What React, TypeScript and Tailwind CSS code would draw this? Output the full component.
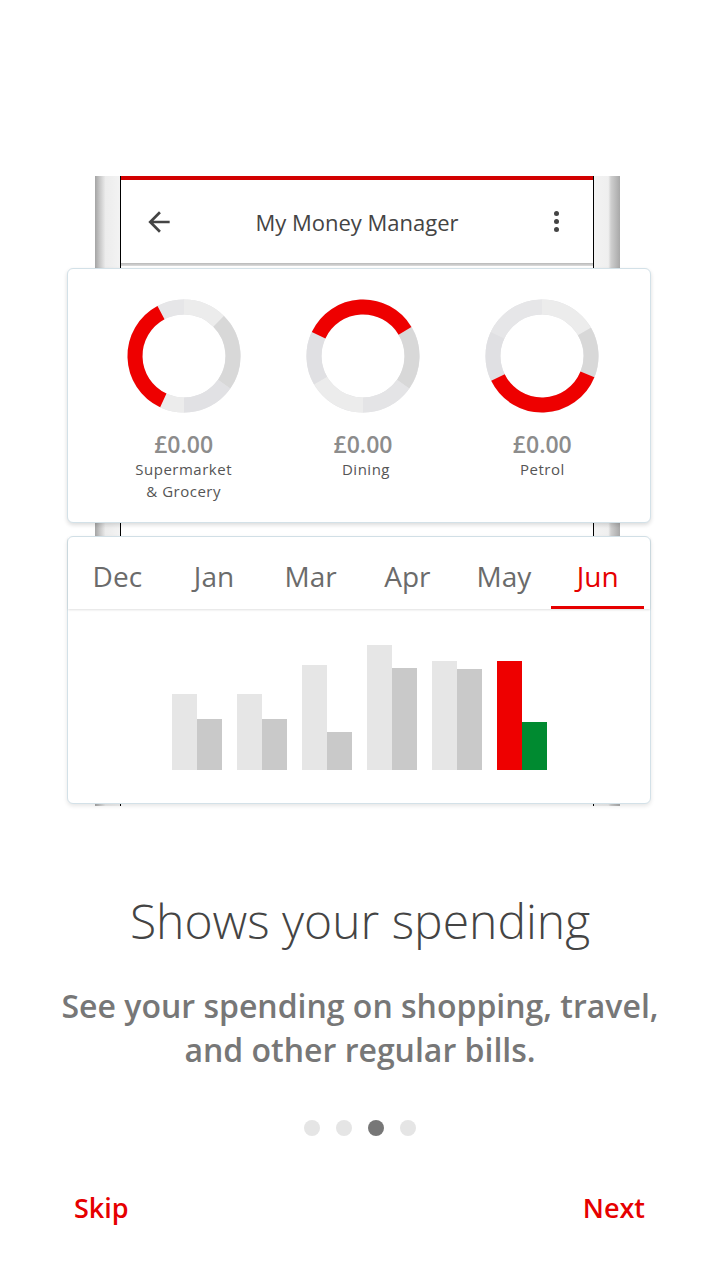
type Seg = { from: number; to: number; color: string };

const donuts: { amount: string; label: string[]; shift: string; segs: Seg[] }[] = [
  {
    amount: "£0.00",
    label: ["Supermarket", "& Grocery"],
    shift: "",
    segs: [
      { from: 332, to: 360, color: "#e6e6e8" },
      { from: 0, to: 45, color: "#ececec" },
      { from: 45, to: 125, color: "#d8d8d8" },
      { from: 125, to: 180, color: "#e1e1e4" },
      { from: 180, to: 205, color: "#ececec" },
      { from: 205, to: 332, color: "#ee0000" },
    ],
  },
  {
    amount: "£0.00",
    label: ["Dining"],
    shift: "pl-[6px]",
    segs: [
      { from: 59, to: 125, color: "#d8d8d8" },
      { from: 125, to: 180, color: "#e4e4e6" },
      { from: 180, to: 240, color: "#ececec" },
      { from: 240, to: 295, color: "#e0e0e3" },
      { from: 295, to: 419, color: "#ee0000" },
    ],
  },
  {
    amount: "£0.00",
    label: ["Petrol"],
    shift: "",
    segs: [
      { from: 244, to: 295, color: "#e0e0e3" },
      { from: 295, to: 360, color: "#e6e6e8" },
      { from: 0, to: 60, color: "#ececec" },
      { from: 60, to: 112, color: "#d8d8d8" },
      { from: 112, to: 244, color: "#ee0000" },
    ],
  },
];

const months = ["Dec", "Jan", "Mar", "Apr", "May", "Jun"];

// [light, dark] heights in px
const bars: [number, number][] = [
  [76, 51],
  [76, 51],
  [105, 38],
  [125, 102],
  [109, 101],
  [109, 48],
];

function arcPath(a0: number, a1: number) {
  const c = 57;
  const r = 49;
  if (a1 < a0) a1 += 360;
  const p = (a: number) => {
    const rad = (a * Math.PI) / 180;
    return [c + r * Math.sin(rad), c - r * Math.cos(rad)];
  };
  const [x0, y0] = p(a0);
  const [x1, y1] = p(a1);
  const large = a1 - a0 > 180 ? 1 : 0;
  return `M ${x0} ${y0} A ${r} ${r} 0 ${large} 1 ${x1} ${y1}`;
}

function Donut({ segs }: { segs: Seg[] }) {
  return (
    <svg width="114" height="114" viewBox="0 0 114 114">
      <circle cx="57" cy="57" r="49" fill="none" stroke="#e3e3e5" strokeWidth="15" />
      {segs.map((s, i) => (
        <path key={i} d={arcPath(s.from, s.to)} fill="none" stroke={s.color} strokeWidth="15" />
      ))}
    </svg>
  );
}

export default function App() {
  return (
    <div className="w-[720px] h-[1280px] bg-white font-['Open_Sans',sans-serif] pt-[176px] overflow-hidden">
      {/* Phone mockup */}
      <div className="ml-[95px] w-[525px] flex">
        <div className="w-[25px] bg-[linear-gradient(to_right,#a4a4a4,#c9c9c9_20%,#ececec_42%,#f3f3f3)]" />
        <div className="w-[474px] border-x border-black bg-white flex flex-col">
          <div className="h-[4px] bg-[#d20000]" />
          <div className="h-[83px] flex items-center text-[#444]">
            <div className="w-[70px] pl-[22px]">
              <svg width="32" height="32" viewBox="0 0 24 24" fill="#444">
                <path d="M20 11H7.83l5.59-5.59L12 4l-8 8 8 8 1.41-1.41L7.83 13H20v-2z" />
              </svg>
            </div>
            <span className="flex-1 text-center text-[22px] leading-[28px] text-[#444]">My Money Manager</span>
            <div className="w-[70px] flex justify-end pr-[34px]">
              <div className="flex flex-col items-center gap-[3px]">
                <span className="w-[5px] h-[5px] rounded-full bg-[#444]" />
                <span className="w-[5px] h-[5px] rounded-full bg-[#444]" />
                <span className="w-[5px] h-[5px] rounded-full bg-[#444]" />
              </div>
            </div>
          </div>
          <div className="h-[3px] bg-[linear-gradient(to_bottom,#b8b8b8,#dcdcdc)]" />

          {/* Category card */}
          <div className="relative mt-[2px] -ml-[54px] -mr-[58px] h-[255px] bg-white border border-[#d3e1e8] rounded-[6px] shadow-[0_2px_4px_rgba(0,0,0,0.14)] pt-[30px] pl-[26px] pr-[18px] grid grid-cols-3">
            {donuts.map((d, i) => (
              <div key={i} className="flex flex-col items-center">
                <Donut segs={d.segs} />
                <div className="mt-[17px] text-[23px] leading-[28px] font-semibold text-[#8c8c8c]">{d.amount}</div>
                <div className={`text-[15px] leading-[22px] tracking-[0.5px] text-[#555] text-center ${d.shift}`}>
                  {d.label.map((l) => (
                    <div key={l}>{l}</div>
                  ))}
                </div>
              </div>
            ))}
          </div>

          <div className="h-[13px]" />

          {/* Monthly chart card */}
          <div className="relative -ml-[54px] -mr-[58px] h-[268px] bg-white border border-[#d3e1e8] rounded-[6px] shadow-[0_2px_4px_rgba(0,0,0,0.1)] flex flex-col">
            <div className="grid grid-cols-6 shadow-[0_1px_2px_rgba(0,0,0,0.12)] px-[1px]">
              {months.map((m) => {
                const active = m === "Jun";
                return (
                  <div
                    key={m}
                    className={`h-[72px] pt-[19px] text-center text-[28px] leading-[40px] border-b-[3px] ${
                      active ? "text-[#e60000] border-[#e60000] mx-[2px] -translate-x-[3px]" : "text-[#6b6b6b] border-transparent"
                    }`}
                  >
                    {m}
                  </div>
                );
              })}
            </div>
            <div className="flex-1 flex items-end justify-center gap-[15px] pb-[33px]">
              {bars.map(([a, b], i) => {
                const last = i === bars.length - 1;
                return (
                  <div key={i} className="flex items-end">
                    <div className={`w-[25px] ${last ? "bg-[#ee0000]" : "bg-[#e6e6e6]"}`} style={{ height: a }} />
                    <div className={`w-[25px] ${last ? "bg-[#008a30]" : "bg-[#c9c9c9]"}`} style={{ height: b }} />
                  </div>
                );
              })}
            </div>
          </div>
          <div className="h-[2px]" />
        </div>
        <div className="w-[26px] bg-[linear-gradient(to_right,#f3f3f3,#efefef_55%,#cfcfcf_65%,#a8a8a8)]" />
      </div>

      {/* Text */}
      <h1 className="mt-[85px] text-center text-[48px] leading-[60px] font-light text-[#444]">Shows your spending</h1>
      <p className="mt-[33px] text-center text-[32px] leading-[44px] font-semibold text-[#777]">
        See your spending on shopping, travel,
        <br />
        and other regular bills.
      </p>

      {/* Pager dots */}
      <div className="mt-[48px] flex justify-center gap-[16px]">
        <span className="w-[16px] h-[16px] rounded-full bg-[#e5e5e5]" />
        <span className="w-[16px] h-[16px] rounded-full bg-[#e5e5e5]" />
        <span className="w-[16px] h-[16px] rounded-full bg-[#777]" />
        <span className="w-[16px] h-[16px] rounded-full bg-[#e5e5e5]" />
      </div>

      <div className="mt-[52px] flex justify-between pl-[74px] pr-[75px] text-[27px] leading-[40px] font-semibold text-[#e60000]">
        <button>Skip</button>
        <button>Next</button>
      </div>
    </div>
  );
}
